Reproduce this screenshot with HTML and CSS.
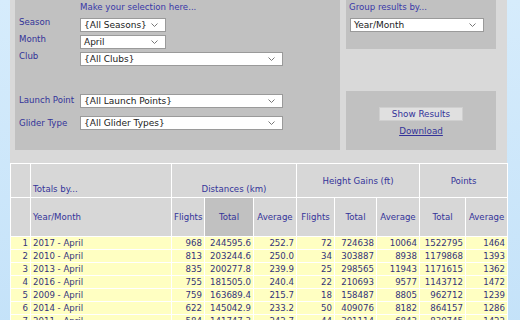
FILE: index.html
```html
<!DOCTYPE html>
<html lang="en">
<head>
  <meta charset="UTF-8">
  <title>Flight Statistics</title>
  <link rel="stylesheet" href="styles.css">
</head>
<body>

<div class="page">
  <div class="filters">
    <div class="panel selection">
      <div class="heading indent">Make your selection here...</div>
      <div class="field">
        <label>Season</label>
        <div class="select short"><span>{All Seasons}</span><svg width="7" height="4" viewBox="0 0 7 4"><path d="M0.5 0.5 L3.5 3.5 L6.5 0.5" fill="none" stroke="#777" stroke-width="1"/></svg></div>
      </div>
      <div class="field">
        <label>Month</label>
        <div class="select short"><span>April</span><svg width="7" height="4" viewBox="0 0 7 4"><path d="M0.5 0.5 L3.5 3.5 L6.5 0.5" fill="none" stroke="#777" stroke-width="1"/></svg></div>
      </div>
      <div class="field">
        <label>Club</label>
        <div class="select long"><span>{All Clubs}</span><svg width="7" height="4" viewBox="0 0 7 4"><path d="M0.5 0.5 L3.5 3.5 L6.5 0.5" fill="none" stroke="#777" stroke-width="1"/></svg></div>
      </div>
      <div class="field spaced">
        <label>Launch Point</label>
        <div class="select long"><span>{All Launch Points}</span><svg width="7" height="4" viewBox="0 0 7 4"><path d="M0.5 0.5 L3.5 3.5 L6.5 0.5" fill="none" stroke="#777" stroke-width="1"/></svg></div>
      </div>
      <div class="field glider">
        <label>Glider Type</label>
        <div class="select long"><span>{All Glider Types}</span><svg width="7" height="4" viewBox="0 0 7 4"><path d="M0.5 0.5 L3.5 3.5 L6.5 0.5" fill="none" stroke="#777" stroke-width="1"/></svg></div>
      </div>
    </div>

    <div class="side">
      <div class="panel group">
        <div class="heading">Group results by...</div>
        <div class="select wide"><span>Year/Month</span><svg width="7" height="4" viewBox="0 0 7 4"><path d="M0.5 0.5 L3.5 3.5 L6.5 0.5" fill="none" stroke="#777" stroke-width="1"/></svg></div>
      </div>
      <div class="panel actions">
        <button class="show">Show Results</button>
        <a href="#" class="download">Download</a>
      </div>
    </div>
  </div>

  <table class="results">
    <colgroup>
      <col style="width:20px"><col style="width:141px"><col style="width:33px"><col style="width:49px"><col style="width:43px">
      <col style="width:38px"><col style="width:42px"><col style="width:43px"><col style="width:46px"><col style="width:42px">
    </colgroup>
    <thead>
      <tr class="group-row">
        <th></th>
        <th class="left bottom">Totals by...</th>
        <th colspan="3" class="bottom">Distances (km)</th>
        <th colspan="3">Height Gains (ft)</th>
        <th colspan="2">Points</th>
      </tr>
      <tr class="col-row">
        <th></th>
        <th class="left">Year/Month</th>
        <th>Flights</th>
        <th class="sorted">Total</th>
        <th>Average</th>
        <th>Flights</th>
        <th>Total</th>
        <th>Average</th>
        <th>Total</th>
        <th>Average</th>
      </tr>
    </thead>
    <tbody>
      <tr><td>1</td><td class="left">2017 - April</td><td>968</td><td>244595.6</td><td>252.7</td><td>72</td><td>724638</td><td>10064</td><td>1522795</td><td>1464</td></tr>
      <tr><td>2</td><td class="left">2010 - April</td><td>813</td><td>203244.6</td><td>250.0</td><td>34</td><td>303887</td><td>8938</td><td>1179868</td><td>1393</td></tr>
      <tr><td>3</td><td class="left">2013 - April</td><td>835</td><td>200277.8</td><td>239.9</td><td>25</td><td>298565</td><td>11943</td><td>1171615</td><td>1362</td></tr>
      <tr><td>4</td><td class="left">2016 - April</td><td>755</td><td>181505.0</td><td>240.4</td><td>22</td><td>210693</td><td>9577</td><td>1143712</td><td>1472</td></tr>
      <tr><td>5</td><td class="left">2009 - April</td><td>759</td><td>163689.4</td><td>215.7</td><td>18</td><td>158487</td><td>8805</td><td>962712</td><td>1239</td></tr>
      <tr><td>6</td><td class="left">2014 - April</td><td>622</td><td>145042.9</td><td>233.2</td><td>50</td><td>409076</td><td>8182</td><td>864157</td><td>1286</td></tr>
      <tr><td>7</td><td class="left">2011 - April</td><td>584</td><td>141747.3</td><td>242.7</td><td>44</td><td>301114</td><td>6843</td><td>830745</td><td>1422</td></tr>
    </tbody>
  </table>
</div>

</body>
</html>
```

FILE: styles.css
```css
body {
  margin: 0;
  background: linear-gradient(180deg, #d6ecfc 0%, #c4e2f9 100%);
  font-family: "DejaVu Sans", Verdana, sans-serif;
  font-size: 8.6px;
  color: #333399;
  overflow: hidden;
}
.page {
  margin-left: 10px;
  width: 497px;
  background: #d9d9d9;
}
.filters {
  display: flex;
  gap: 6px;
  padding-left: 5px;
  height: 150px;
  padding-bottom: 13px;
}
.panel {
  background: #c1c1c1;
}
.selection {
  width: 321px;
  padding: 2px 0 0 4px;
}
.heading {
  line-height: 11px;
  color: #3838a8;
}
.heading.indent {
  margin-left: 61px;
}
.field {
  display: flex;
  align-items: flex-start;
  margin-top: 3px;
}
.selection .heading + .field {
  margin-top: 5px;
}
.field label {
  width: 61px;
  line-height: 10px;
  margin-top: -1px;
}
.field.spaced {
  margin-top: 28px;
}
.field.spaced label {
  margin-top: 1px;
}
.field.glider {
  margin-top: 8px;
  align-items: center;
}
.select {
  box-sizing: border-box;
  height: 14px;
  background: #fff;
  border: 1px solid #9a9a9a;
  display: flex;
  align-items: center;
  justify-content: space-between;
  padding: 0 7px 0 3px;
  color: #1a1a1a;
  font-size: 9px;
}
.select svg {
  display: block;
}
.select.short {
  width: 86px;
}
.select.long {
  width: 203px;
}
.select.wide {
  width: 134px;
  margin-left: 1px;
  margin-top: 5px;
}
.side {
  width: 150px;
  display: flex;
  flex-direction: column;
  justify-content: space-between;
}
.group {
  height: 47px;
  padding: 2px 0 0 3px;
}
.actions {
  height: 59px;
  display: flex;
  flex-direction: column;
  align-items: center;
  padding-top: 16px;
  box-sizing: border-box;
}
button.show {
  width: 84px;
  height: 14px;
  padding: 0;
  border: 1px solid #cfcfcf;
  background: #e0e0e0;
  color: #333399;
  font-family: inherit;
  font-size: 8.8px;
  line-height: 12px;
}
.download {
  margin-top: 5px;
  color: #333399;
  font-size: 8.8px;
  text-decoration: underline;
}
.results {
  width: 497px;
  table-layout: fixed;
  border-collapse: collapse;
  border-top: 1px solid #fff;
}
.results th,
.results td {
  border: 1px solid #fff;
  padding: 0 2px;
  font-weight: normal;
  white-space: nowrap;
  overflow: hidden;
}
.results th {
  background: #d7d7d7;
  text-align: center;
  vertical-align: middle;
}
.results th.left {
  text-align: left;
}
.results th.bottom {
  vertical-align: bottom;
  padding-bottom: 3px;
}
.results th.sorted {
  background: #c1c1c1;
}
.group-row th {
  height: 30px;
}
.col-row th {
  height: 38px;
}
.results td {
  background: #ffffc2;
  text-align: right;
  height: 12px;
  line-height: 12px;
  color: #33337a;
}
.results td.left {
  text-align: left;
}
```
